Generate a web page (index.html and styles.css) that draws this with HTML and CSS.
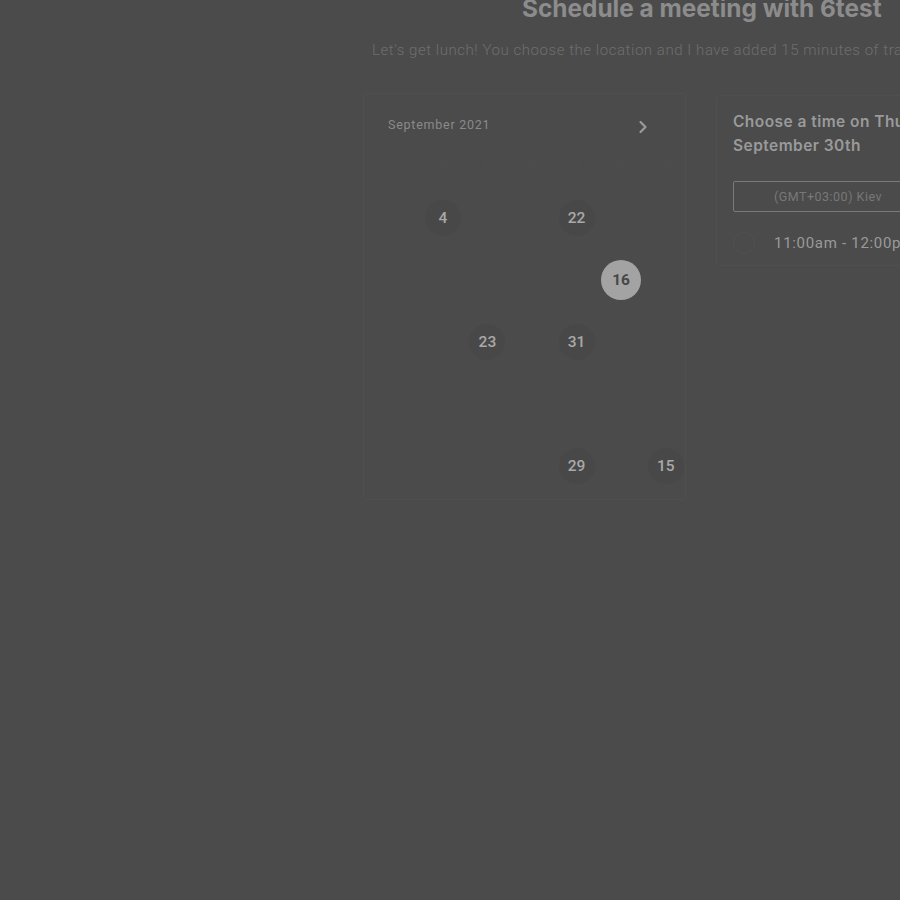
FILE: index.html
```html
<!DOCTYPE html>
<html>
<head>
<meta charset="utf-8">
<link rel="stylesheet" href="styles.css">
</head>
<body>
<div class="page">
  <h1 class="title">Schedule a meeting with 6test</h1>
  <p class="subtitle">Let's get lunch! You choose the location and I have added 15 minutes of travel time before and after the meeting.</p>
  <div class="panels">
    <div class="calendar">
      <div class="cal-head">
        <span class="month">September 2021</span>
        <svg class="chev" width="10" height="14" viewBox="0 0 10 14"><path d="M2.5 2 L7.5 7 L2.5 12" fill="none" stroke="#9a9a9a" stroke-width="2.2" stroke-linecap="round" stroke-linejoin="round"/></svg>
      </div>
      <div class="weekdays">
        <span>S</span><span>M</span><span>T</span><span>W</span><span>T</span><span>F</span><span>S</span>
      </div>
      <div class="grid">
        <span class="cell"></span><span class="cell"><b class="day">4</b></span><span class="cell"></span><span class="cell"></span><span class="cell"><b class="day">22</b></span><span class="cell"></span><span class="cell"></span>
        <span class="cell"></span><span class="cell"></span><span class="cell"></span><span class="cell"></span><span class="cell"></span><span class="cell"><b class="day sel">16</b></span><span class="cell"></span>
        <span class="cell"></span><span class="cell"></span><span class="cell"><b class="day">23</b></span><span class="cell"></span><span class="cell"><b class="day">31</b></span><span class="cell"></span><span class="cell"></span>
        <span class="cell"></span><span class="cell"></span><span class="cell"></span><span class="cell"></span><span class="cell"></span><span class="cell"></span><span class="cell"></span>
        <span class="cell"></span><span class="cell"></span><span class="cell"></span><span class="cell"></span><span class="cell"><b class="day">29</b></span><span class="cell"></span><span class="cell"><b class="day">15</b></span>
      </div>
    </div>
    <div class="times">
      <h2 class="times-title">Choose a time on Thursday,<br>September 30th</h2>
      <div class="tz">(GMT+03:00) Kiev</div>
      <div class="slot">
        <span class="radio"></span>
        <span class="slot-text">11:00am - 12:00pm</span>
      </div>
    </div>
  </div>
</div>
</body>
</html>
```
FILE: styles.css
```css
html, body {
  margin: 0;
  padding: 0;
  background: #4b4b4b;
  overflow: hidden;
  width: 900px;
  height: 900px;
}
.page {
  width: 660px;
  margin-left: 372px;
  font-family: Roboto, "Liberation Sans", sans-serif;
}
.title {
  margin: -8px 0 0 150px;
  font-family: Inter, "Liberation Sans", sans-serif;
  font-weight: 700;
  font-size: 24.4px;
  line-height: 32px;
  color: #8c8c8c;
  white-space: nowrap;
}
.subtitle {
  margin: 16px 0 0 0;
  font-weight: 300;
  font-size: 15px;
  line-height: 20px;
  color: #6e6e6e;
  letter-spacing: 0.55px;
  white-space: nowrap;
}
.panels {
  display: flex;
  gap: 30px;
  margin-top: 33px;
  margin-left: -9px;
  align-items: flex-start;
}
.calendar {
  width: 323px;
  height: 407px;
  box-sizing: border-box;
  border: 1px solid #4f4f4f;
  border-radius: 3px;
  padding: 20px 0 0 12px;
  flex-shrink: 0;
}
.cal-head {
  display: flex;
  justify-content: space-between;
  align-items: center;
  width: 260px;
  padding-left: 12px;
}
.month {
  font-size: 12.5px;
  color: #8a8a8a;
  letter-spacing: 0.75px;
}
.chev {
  margin-top: 6px;
}
.weekdays {
  display: grid;
  grid-template-columns: repeat(7, 1fr);
  width: 312px;
  margin-top: 25px;
  font-size: 11px;
  color: #4d4d4d;
  text-align: center;
  height: 20px;
}
.grid {
  display: grid;
  grid-template-columns: repeat(7, 1fr);
  grid-auto-rows: 62px;
  width: 312px;
  margin-top: 8px;
}
.cell {
  display: flex;
  align-items: center;
  justify-content: center;
}
.day {
  width: 36px;
  height: 36px;
  border-radius: 50%;
  background: #484848;
  display: flex;
  align-items: center;
  justify-content: center;
  font-weight: 500;
  font-size: 15.5px;
  color: #a8a8a8;
}
.day.sel {
  width: 40px;
  height: 40px;
  background: #a3a3a3;
  color: #474747;
  font-weight: 700;
}
.times {
  width: 260px;
  height: 171px;
  box-sizing: border-box;
  border: 1px solid #4f4f4f;
  border-radius: 3px;
  padding: 14px 16px 0 16px;
  flex-shrink: 0;
  margin-top: 2px;
}
.times-title {
  margin: 0;
  font-family: Inter, "Liberation Sans", sans-serif;
  font-weight: 600;
  font-size: 15.5px;
  line-height: 24px;
  color: #9a9a9a;
  white-space: nowrap;
  letter-spacing: 0.45px;
}
.tz {
  margin-top: 23px;
  width: 190px;
  height: 31px;
  box-sizing: border-box;
  border: 1px solid #7a7a7a;
  border-radius: 2px;
  font-size: 12.5px;
  color: #787878;
  display: flex;
  align-items: center;
  justify-content: center;
  letter-spacing: 0.5px;
}
.slot {
  display: flex;
  align-items: center;
  gap: 19px;
  margin-top: 20px;
}
.radio {
  width: 22px;
  height: 22px;
  border-radius: 50%;
  border: 1px solid #505050;
  box-sizing: border-box;
}
.slot-text {
  font-size: 15px;
  color: #9a9a9a;
  letter-spacing: 0.7px;
  white-space: nowrap;
}
```
